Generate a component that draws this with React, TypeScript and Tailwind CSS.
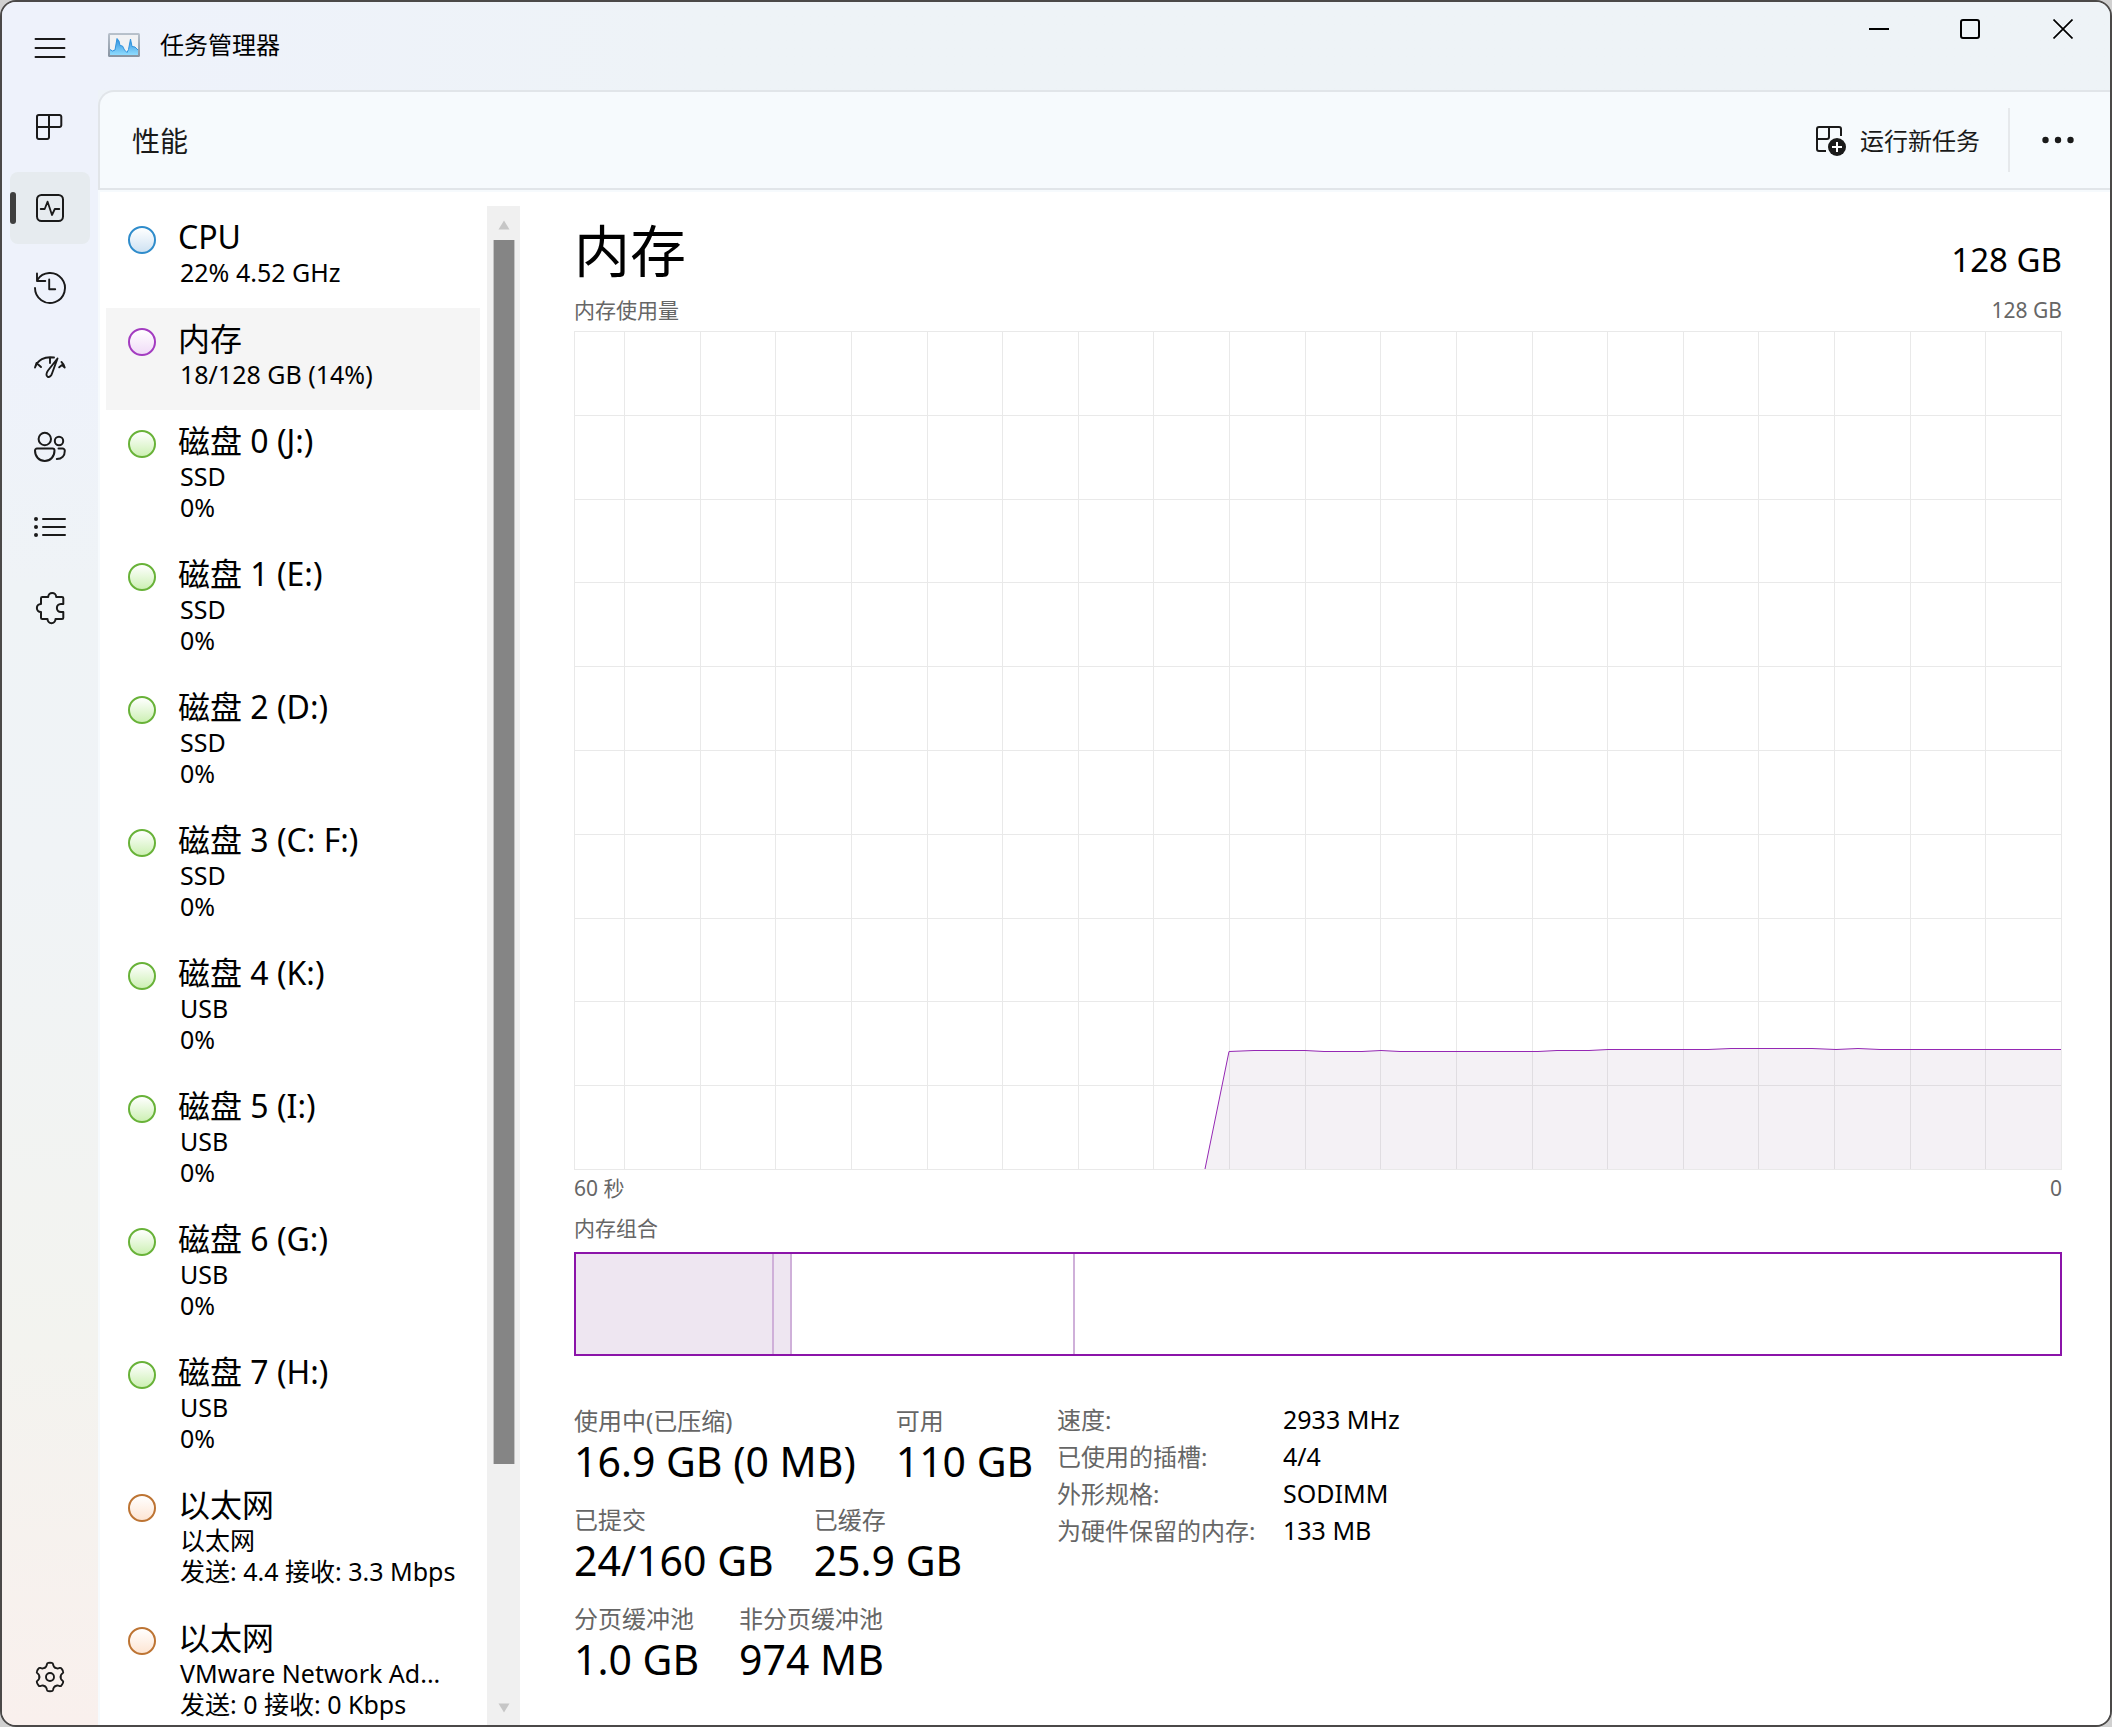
import React, { useState } from 'react';

interface Resource {
  id: string;
  title: string;
  details: string[];
  kind: 'cpu' | 'memory' | 'disk' | 'network';
}

const resources: Resource[] = [
  { id: 'cpu', title: 'CPU', details: ['22% 4.52 GHz'], kind: 'cpu' },
  { id: 'memory', title: '内存', details: ['18/128 GB (14%)'], kind: 'memory' },
  { id: 'disk0', title: '磁盘 0 (J:)', details: ['SSD', '0%'], kind: 'disk' },
  { id: 'disk1', title: '磁盘 1 (E:)', details: ['SSD', '0%'], kind: 'disk' },
  { id: 'disk2', title: '磁盘 2 (D:)', details: ['SSD', '0%'], kind: 'disk' },
  { id: 'disk3', title: '磁盘 3 (C: F:)', details: ['SSD', '0%'], kind: 'disk' },
  { id: 'disk4', title: '磁盘 4 (K:)', details: ['USB', '0%'], kind: 'disk' },
  { id: 'disk5', title: '磁盘 5 (I:)', details: ['USB', '0%'], kind: 'disk' },
  { id: 'disk6', title: '磁盘 6 (G:)', details: ['USB', '0%'], kind: 'disk' },
  { id: 'disk7', title: '磁盘 7 (H:)', details: ['USB', '0%'], kind: 'disk' },
  { id: 'net0', title: '以太网', details: ['以太网', '发送: 4.4 接收: 3.3 Mbps'], kind: 'network' },
  { id: 'net1', title: '以太网', details: ['VMware Network Ad...', '发送: 0 接收: 0 Kbps'], kind: 'network' },
];

const dotStyles: Record<Resource['kind'], string> = {
  cpu: 'border-[#2f8ccb] from-white to-[#cfe2f2]',
  memory: 'border-[#a33cc0] from-white to-[#f0dcf7]',
  disk: 'border-[#68b238] from-white to-[#cdf0b4]',
  network: 'border-[#bd7433] from-white to-[#fde5d3]',
};

const statRows = [
  [
    { label: '使用中(已压缩)', value: '16.9 GB (0 MB)' },
    { label: '可用', value: '110 GB' },
  ],
  [
    { label: '已提交', value: '24/160 GB' },
    { label: '已缓存', value: '25.9 GB' },
  ],
  [
    { label: '分页缓冲池', value: '1.0 GB' },
    { label: '非分页缓冲池', value: '974 MB' },
  ],
];

const hardware = [
  { label: '速度:', value: '2933 MHz' },
  { label: '已使用的插槽:', value: '4/4' },
  { label: '外形规格:', value: 'SODIMM' },
  { label: '为硬件保留的内存:', value: '133 MB' },
];

// x / y of every change in the usage line, in chart units
const usage = [
  [631, 838], [655, 720.5], [680, 719.5], [731, 719.5], [750, 720.5], [788, 720.5], [807, 719.5],
  [826, 720.5], [964, 720.5], [983, 719.5], [1015, 719.5], [1034, 718.5], [1134, 718.5],
  [1157, 717.5], [1238, 717.5], [1262, 718.5], [1284, 717.5], [1306, 718.5], [1487, 718.5],
];

const Icon: React.FC<{ children: React.ReactNode }> = ({ children }) => (
  <svg
    viewBox="0 0 36 36"
    className="h-9 w-9"
    fill="none"
    stroke="#1a1a1a"
    strokeWidth="2"
    strokeLinecap="round"
    strokeLinejoin="round"
    aria-hidden="true"
  >
    {children}
  </svg>
);

const navItems = [
  {
    id: 'processes',
    label: '进程',
    icon: (
      <Icon>
        <path d="M6.8 5h20.700a1.800 1.800 0 0 1 1.800 1.800v8.400a1.800 1.800 0 0 1-1.800 1.800H17v10.200a1.800 1.800 0 0 1-1.800 1.800H6.800A1.800 1.800 0 0 1 5 27.200V6.800A1.800 1.800 0 0 1 6.800 5M17 5v12H5" />
      </Icon>
    ),
  },
  {
    id: 'performance',
    label: '性能',
    icon: (
      <Icon>
        <rect x="5" y="5" width="26" height="26" rx="4.5" />
        <path d="M8.7 19h4l2.9-7.3L20 25l2.8-6h4.5" strokeWidth="1.8" />
      </Icon>
    ),
  },
  {
    id: 'history',
    label: '应用历史记录',
    icon: (
      <Icon>
        <path d="M3 18a15 15 0 1 0 2.3-8M5 3.5V11h8.3M17.2 9.500V19.300h6" strokeWidth="1.9" />
      </Icon>
    ),
  },
  {
    id: 'startup',
    label: '启动应用',
    icon: (
      <Icon>
        <path d="M3 17.5C5.5 10 12.5 6 22 7.5M3 17.5l1.5-4.500 4.500 4M18 7.500V13M29.500 12c1.600 1.500 2.600 3.300 3.200 5.500l-2.700-2.400-2.800 2.200" strokeWidth="1.9" />
        <path d="M25.5 8.5L16 20.5c-1.800 2.500-2.200 5.500-.3 6.300 1.800.7 3.500-.8 4.300-3.300z" strokeWidth="1.9" />
      </Icon>
    ),
  },
  {
    id: 'users',
    label: '用户',
    icon: (
      <Icon>
        <circle cx="12.8" cy="9" r="6.2" />
        <circle cx="27" cy="11" r="4.2" />
        <path d="M5 18.500h15.500a2 2 0 0 1 2 2c0 6-4 10.500-9.700 10.500S3 26.500 3 20.500a2 2 0 0 1 2-2zM26.500 18.500h4a2.200 2.200 0 0 1 2.300 2.200c0 5-3 8.300-8 8.300" />
      </Icon>
    ),
  },
  {
    id: 'details',
    label: '详细信息',
    icon: (
      <Icon>
        <path d="M11 9h22M11 17h22M11 25h22" />
        <g fill="#1a1a1a" stroke="none">
          <circle cx="4" cy="9" r="2" />
          <circle cx="4" cy="17" r="2" />
          <circle cx="4" cy="25" r="2" />
        </g>
      </Icon>
    ),
  },
  {
    id: 'services',
    label: '服务',
    icon: (
      <Icon>
        <path d="M10.300 7H16.200C16.200 1.500 24.200 1.500 24.200 7H30a1.300 1.300 0 0 1 1.300 1.300V14H29c-5.500 0-5.500 8 0 8h2.300v5.700A1.300 1.300 0 0 1 30 29H23.500C23.500 34.500 15.500 34.500 15.500 29H10.300A1.300 1.300 0 0 1 9 27.700V22C3.500 22 3.500 14 9 14V8.300A1.300 1.300 0 0 1 10.300 7z" />
      </Icon>
    ),
  },
];

const GearIcon = () => (
  <Icon>
    <g transform="translate(18 18)" strokeWidth="1.9">
      {[0, 60, 120, 180, 240, 300].map(angle => (
        <path
          key={angle}
          transform={`rotate(${angle})`}
          d="M-5.3-9.2Q-3.8-10-3.4-11.5L-3-13Q-2.7-14-1.8-14.100Q0-14.400 1.800-14.100Q2.700-14 3-13L3.400-11.500Q3.800-10 5.300-9.200"
        />
      ))}
      <circle r="4" />
    </g>
  </Icon>
);

const AppIcon = () => (
  <svg viewBox="0 0 32 24" className="h-6 w-8" aria-hidden="true">
    <defs>
      <linearGradient id="app-frame" x1="0" y1="0" x2="0" y2="1">
        <stop offset="0" stopColor="#b9c2cc" />
        <stop offset="1" stopColor="#8793a1" />
      </linearGradient>
      <linearGradient id="app-fill" x1="0" y1="0" x2="0" y2="1">
        <stop offset="0" stopColor="#2f8fdc" />
        <stop offset="1" stopColor="#8fdcff" />
      </linearGradient>
    </defs>
    <rect width="32" height="24" rx="1.5" fill="url(#app-frame)" />
    <rect x="2" y="2" width="28" height="20" fill="#f1f2f4" />
    <path
      d="M2 16.5l2.5 1.5L7 17 9 5.5l2 2.5 1 4.500 2.500.5 2 4 2.500 2.500 1.500-3L22.500 6 24 13.500l3 .5 3 3v5H2z"
      fill="url(#app-fill)"
    />
    <path
      d="M2 16.5l2.5 1.5L7 17 9 5.5l2 2.5 1 4.500 2.500.5 2 4 2.500 2.500 1.500-3L22.500 6 24 13.500l3 .5 3 3"
      fill="none"
      stroke="#2f93de"
      strokeWidth="1"
    />
  </svg>
);

const NavButton: React.FC<{
  label: string;
  active?: boolean;
  onClick?: () => void;
  children: React.ReactNode;
}> = ({ label, active, onClick, children }) => (
  <button
    type="button"
    aria-label={label}
    onClick={onClick}
    className={`relative flex h-[72px] w-full items-center justify-center rounded-lg ${
      active ? 'bg-[#e6ebef]' : ''
    }`}
  >
    {active && <span className="absolute left-0 h-8 w-1.5 rounded-full bg-[#3f3f3f]" />}
    {children}
  </button>
);

const UsageChart = () => {
  const line = usage.map(([x, y]) => `${x},${y}`).join(' ');
  const columns = Array.from({ length: 19 }, (_, i) => Math.round(50 + i * 75.63) + 0.5);
  const rows = Array.from({ length: 9 }, (_, i) => Math.round((i + 1) * 83.8) + 0.5);

  return (
    <svg
      viewBox="0 0 1488 839"
      preserveAspectRatio="none"
      className="block min-h-0 w-full flex-1"
      role="img"
      aria-label="内存使用量"
    >
      <g stroke="#e9e9e9" fill="none">
        <rect x="0.5" y="0.5" width="1487" height="838" />
        {columns.map(x => (
          <line key={x} x1={x} x2={x} y1="0" y2="839" />
        ))}
        {rows.map(y => (
          <line key={y} x1="0" x2="1488" y1={y} y2={y} />
        ))}
      </g>
      <polygon points={`${line} 1487,838`} fill="#917399" fillOpacity="0.1" />
      <polyline points={line} fill="none" stroke="#9528b4" />
    </svg>
  );
};

const ResourceList: React.FC<{ selected: string; onSelect: (id: string) => void }> = ({
  selected,
  onSelect,
}) => (
  <div className="flex min-h-0 shrink-0 pt-3.5 pl-1.5">
    <ul className="w-[374px] overflow-hidden">
      {resources.map(item => (
        <li key={item.id}>
          <button
            type="button"
            onClick={() => onSelect(item.id)}
            className={`flex w-full items-start gap-[22px] pt-[11px] pb-5 pl-[22px] text-left ${
              selected === item.id ? 'bg-[#f5f5f5]' : ''
            }`}
          >
            <span
              className={`mt-[9px] h-7 w-7 shrink-0 rounded-full border-2 bg-linear-to-b ${dotStyles[item.kind]}`}
            />
            <span className="block whitespace-nowrap">
              <span className="block text-[32px] leading-10">{item.title}</span>
              {item.details.map(line => (
                <span key={line} className="block pl-0.5 text-[25px] leading-[31px]">
                  {line}
                </span>
              ))}
            </span>
          </button>
        </li>
      ))}
    </ul>

    <div className="ml-[7px] flex w-[33px] flex-col items-center bg-[#f0f0f0]">
      <svg viewBox="0 0 12 10" className="mt-3.5 h-2.5 w-3" aria-hidden="true">
        <path d="M6 0.5L11.5 9.5H0.5z" fill="#c6c6c6" />
      </svg>
      <div className="mt-2.5 w-[22px] flex-[1227] border-x border-[#c4c4c4] bg-[#858585]" />
      <div className="flex-[229]" />
      <svg viewBox="0 0 12 10" className="mt-2.5 mb-3 h-2.5 w-3" aria-hidden="true">
        <path d="M6 9.5L11.5 0.5H0.5z" fill="#c6c6c6" />
      </svg>
    </div>
  </div>
);

const MemoryPanel = () => (
  <section className="flex min-w-0 flex-1 flex-col pt-4 pr-12 pb-[42px] pl-[54px]">
    <div className="flex items-baseline justify-between">
      <h1 className="text-[56px] leading-[84px]">内存</h1>
      <span className="text-[33px]">128 GB</span>
    </div>
    <div className="mt-1 mb-[7px] flex justify-between text-[21px] leading-7 text-[#666]">
      <span>内存使用量</span>
      <span>128 GB</span>
    </div>
    <UsageChart />
    <div className="mt-1 flex justify-between text-[21px] leading-7 text-[#666]">
      <span>60 秒</span>
      <span>0</span>
    </div>

    <h2 className="mt-3 text-[21px] leading-7 text-[#666]">内存组合</h2>
    <div className="mt-2.5 flex h-[104px] border-2 border-[#8b14a9]">
      <div className="w-[13.35%] border-r-2 border-[#cfb0d9] bg-[#eee6f1]" />
      <div className="w-[1.2%] border-r-2 border-[#cfb0d9] bg-[#eee6f1]" />
      <div className="w-[19.1%] border-r-2 border-[#cfb0d9]" />
    </div>

    <div className="mt-[45px] flex items-start">
      <div className="flex w-[483px] shrink-0 flex-col gap-[19px] pt-1">
        {statRows.map(row => (
          <dl key={row[0].label} className="flex gap-10 whitespace-nowrap">
            {row.map(stat => (
              <div key={stat.label}>
                <dt className="text-[24px] leading-8 text-[#666]">{stat.label}</dt>
                <dd className="text-[41px] leading-[48px]">{stat.value}</dd>
              </div>
            ))}
          </dl>
        ))}
      </div>
      <table className="text-left text-[24px] leading-[37px]">
        <tbody>
          {hardware.map(row => (
            <tr key={row.label}>
              <th scope="row" className="w-[226px] p-0 font-normal text-[#666]">
                {row.label}
              </th>
              <td className="p-0 text-[25px]">{row.value}</td>
            </tr>
          ))}
        </tbody>
      </table>
    </div>
  </section>
);

export default function App() {
  const [page, setPage] = useState('performance');
  const [selected, setSelected] = useState('memory');

  return (
    <div className="h-screen bg-[#d0d0d0] font-['Noto_Sans','Noto_Sans_CJK_SC',sans-serif] text-black">
      <div className="flex h-full overflow-hidden rounded-2xl border-2 border-[#4b4948] bg-[#eef3f8]">
        <nav className="flex w-24 shrink-0 flex-col gap-2 bg-[linear-gradient(to_bottom,#eef2fb_20%,#eff3f6_34%,#f0f3f6_50%,#f3f3ef_78%,#f9f0ed)] px-2 pt-2.5 pb-3">
          <NavButton label="打开导航">
            <Icon>
              <path d="M3.5 9h29M3.5 18h29M3.5 27h29" strokeWidth="1.9" />
            </Icon>
          </NavButton>
          {navItems.map(item => (
            <NavButton
              key={item.id}
              label={item.label}
              active={page === item.id}
              onClick={() => setPage(item.id)}
            >
              {item.icon}
            </NavButton>
          ))}
          <div className="mt-auto">
            <NavButton label="设置">
              <GearIcon />
            </NavButton>
          </div>
        </nav>

        <div className="flex min-w-0 flex-1 flex-col">
          {/* Title bar */}
          <header className="flex h-[88px] shrink-0 justify-between bg-linear-to-r from-[#eef2fb] to-[#eef3f7] to-30% pl-2.5">
            <div className="flex items-center gap-5 pb-0.5">
              <AppIcon />
              <span className="text-[24px] leading-8">任务管理器</span>
            </div>
            <div className="flex h-[54px]">
              <button type="button" aria-label="最小化" className="flex w-[91px] items-center justify-center">
                <svg viewBox="0 0 20 20" className="h-5 w-5" stroke="#000" strokeWidth="2">
                  <path d="M0 10h20" />
                </svg>
              </button>
              <button type="button" aria-label="最大化" className="flex w-[92px] items-center justify-center">
                <svg viewBox="0 0 20 20" className="h-5 w-5" fill="none" stroke="#000" strokeWidth="2">
                  <rect x="1" y="1" width="18" height="18" rx="2" />
                </svg>
              </button>
              <button type="button" aria-label="关闭" className="flex w-[94px] items-center justify-center">
                <svg viewBox="0 0 20 20" className="h-5 w-5" stroke="#000" strokeWidth="1.7">
                  <path d="M0.5 0.5l19 19M19.5 0.5l-19 19" />
                </svg>
              </button>
            </div>
          </header>

          {/* Command bar */}
          <div className="flex h-[100px] shrink-0 items-center justify-between rounded-tl-2xl border-t-2 border-b-2 border-l-2 border-[#e1e5e9] bg-[#f6fafd] pl-8">
            <span className="pt-0.5 text-[28px] leading-9 text-[#1a1a1a]">性能</span>
            <div className="flex h-16 items-center">
              <button type="button" className="flex items-center gap-3.5 pr-7 text-[24px] leading-8 text-[#1a1a1a]">
                <svg viewBox="0 0 32 32" className="h-8 w-8" fill="none" stroke="#1a1a1a" strokeWidth="2" aria-hidden="true">
                  <path d="M12 27H5a2 2 0 0 1-2-2V5a2 2 0 0 1 2-2h20a2 2 0 0 1 2 2v7M15 3v10a2 2 0 0 1-2 2H3" />
                  <circle cx="23" cy="23" r="9" fill="#1a1a1a" stroke="none" />
                  <path d="M23 18v10M18 23h10" stroke="#fff" />
                </svg>
                <span className="pt-0.5">运行新任务</span>
              </button>
              <button
                type="button"
                aria-label="更多选项"
                className="flex h-full items-center border-l-2 border-[#e6e9ec] pr-9 pl-8"
              >
                <svg viewBox="0 0 32 8" className="h-2 w-8" fill="#1a1a1a" aria-hidden="true">
                  <circle cx="3.5" cy="4" r="3.2" />
                  <circle cx="16" cy="4" r="3.2" />
                  <circle cx="28.5" cy="4" r="3.2" />
                </svg>
              </button>
            </div>
          </div>

          <main className="flex min-h-0 flex-1 border-t-2 border-l-2 border-[#f6fafd] bg-white">
            <ResourceList selected={selected} onSelect={setSelected} />
            <MemoryPanel />
          </main>
        </div>
      </div>
    </div>
  );
}
